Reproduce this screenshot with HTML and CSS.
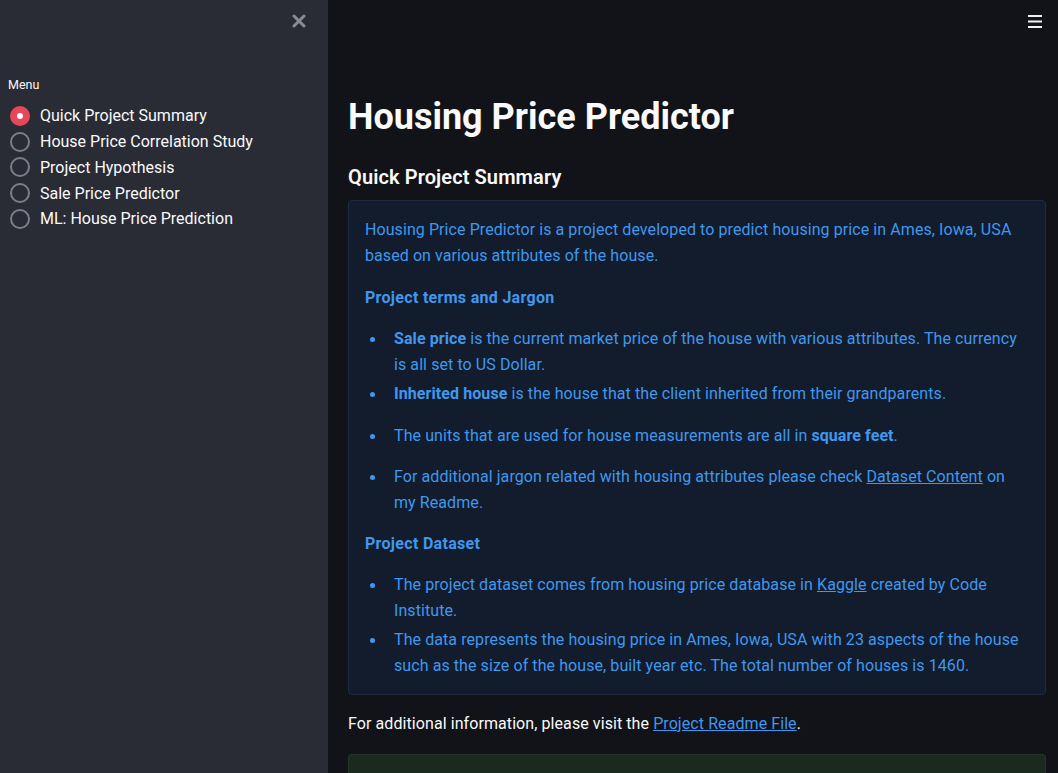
FILE: index.html
```html
<!DOCTYPE html>
<html>
<head>
<meta charset="utf-8">
<link rel="stylesheet" href="styles.css">
</head>
<body>
<div class="app">
  <aside class="sidebar">
    <div class="side-top">
      <svg class="close" width="14" height="14" viewBox="0 0 14 14"><path d="M2 2L12 12M12 2L2 12" stroke="#8a8c93" stroke-width="3" stroke-linecap="round"/></svg>
    </div>
    <div class="menu-label">Menu</div>
    <div class="radios">
      <div class="radio selected"><span class="dot"></span><span>Quick Project Summary</span></div>
      <div class="radio"><span class="dot"></span><span>House Price Correlation Study</span></div>
      <div class="radio"><span class="dot"></span><span>Project Hypothesis</span></div>
      <div class="radio"><span class="dot"></span><span>Sale Price Predictor</span></div>
      <div class="radio"><span class="dot"></span><span>ML: House Price Prediction</span></div>
    </div>
  </aside>
  <main class="main">
    <div class="topbar">
      <svg width="14" height="13" viewBox="0 0 14 13"><rect x="0" y="0" width="14" height="2" fill="#f0f0f0"/><rect x="0" y="5.5" width="14" height="2" fill="#f0f0f0"/><rect x="0" y="11" width="14" height="2" fill="#f0f0f0"/></svg>
    </div>
    <div class="content">
      <h1 class="title">Housing Price Predictor</h1>
      <h3 class="subheader">Quick Project Summary</h3>
      <div class="info">
        <p>Housing Price Predictor is a project developed to predict housing price in Ames, Iowa, USA based on various attributes of the house.</p>
        <p class="label"><strong>Project terms and Jargon</strong></p>
        <ul>
          <li class="tight"><strong>Sale price</strong> is the current market price of the house with various attributes. The currency is all set to US Dollar.</li>
          <li><strong>Inherited house</strong> is the house that the client inherited from their grandparents.</li>
          <li>The units that are used for house measurements are all in <strong>square feet</strong>.</li>
          <li>For additional jargon related with housing attributes please check <a href="#">Dataset Content</a> on my Readme.</li>
        </ul>
        <p class="label"><strong>Project Dataset</strong></p>
        <ul class="last">
          <li class="tight">The project dataset comes from housing price database in <a href="#">Kaggle</a> created by Code Institute.</li>
          <li>The data represents the housing price in Ames, Iowa, USA with 23 aspects of the house such as the size of the house, built year etc. The total number of houses is 1460.</li>
        </ul>
      </div>
      <p class="note">For additional information, please visit the <a href="#">Project Readme File</a>.</p>
      <div class="success"></div>
    </div>
  </main>
</div>
</body>
</html>
```

FILE: styles.css
```css
* { box-sizing: border-box; }
html, body { margin: 0; padding: 0; height: 100%; }
body {
  font-family: Roboto, "Noto Sans", sans-serif;
  background: #111318;
  color: #fafafa;
  overflow: hidden;
}
.app { display: flex; height: 773px; }
.sidebar {
  width: 328px;
  flex: none;
  background: #292b35;
  padding: 0 8px;
}
.side-top {
  height: 74px;
  display: flex;
  justify-content: flex-end;
  padding: 14px 14px 0 0;
}
.close { display: block; }
.menu-label {
  font-size: 12.5px;
  color: #fafafa;
  height: 22px;
  line-height: 22px;
}
.radios { display: flex; flex-direction: column; padding-top: 7px; }
.radio {
  display: flex;
  align-items: center;
  gap: 10px;
  height: 25.75px;
  font-size: 16px;
  color: #fafafa;
}
.dot {
  width: 20px;
  height: 20px;
  border-radius: 50%;
  border: 2px solid #7d7f86;
  flex: none;
  margin-left: 2px;
  position: relative;
}
.radio.selected .dot {
  background: #e8475c;
  border-color: #e8475c;
}
.radio.selected .dot::after {
  content: "";
  position: absolute;
  left: 5px; top: 5px;
  width: 6px; height: 6px;
  border-radius: 50%;
  background: #fff;
}
.main { flex: 1; display: flex; flex-direction: column; min-width: 0; }
.topbar {
  height: 44px;
  display: flex;
  justify-content: flex-end;
  padding: 15px 16px 0 0;
}
.content { padding: 66px 12px 0 20px; }
.title {
  margin: 0;
  font-size: 36px;
  font-weight: 700;
  line-height: 46px;
  color: #fafafa;
}
.subheader {
  margin: 23px 0 0;
  font-size: 20px;
  font-weight: 600;
  line-height: 28px;
  color: #fafafa;
  letter-spacing: 0.1px;
}
.info {
  margin-top: 9px;
  background: #131c2c;
  border: 1px solid #1d2b40;
  border-radius: 4px;
  padding: 16px 16px 15px 16px;
  color: #3f98ee;
  font-size: 16px;
  line-height: 26px;
  letter-spacing: 0.08px;
}
.info p { margin: 0 0 16px; }
.info p.label { font-size: 16px; letter-spacing: 0.3px; margin-bottom: 15px; }
.info strong { font-weight: 700; }
.info ul { margin: 0 0 15px; padding-left: 28px; list-style: none; }
.info ul.last { margin-bottom: 0; }
.info li { margin-bottom: 15.5px; padding-left: 1px; position: relative; }
.info li::before {
  content: "";
  position: absolute;
  left: -23px;
  top: 11px;
  width: 5px;
  height: 5px;
  border-radius: 50%;
  background: #3f98ee;
}
.info li.tight { margin-bottom: 3px; }
.info li:last-child { margin-bottom: 0; }
a { color: #3f98ee; text-decoration: underline; }
.note {
  margin: 16px 0 0;
  font-size: 16px;
  line-height: 26px;
  color: #fafafa;
  letter-spacing: 0.08px;
}
.note a { color: #3f98ee; }
.success {
  margin-top: 17px;
  height: 20px;
  background: #1b2a1f;
  border: 1px solid #243626;
  border-bottom: none;
  border-radius: 4px 4px 0 0;
}
```
